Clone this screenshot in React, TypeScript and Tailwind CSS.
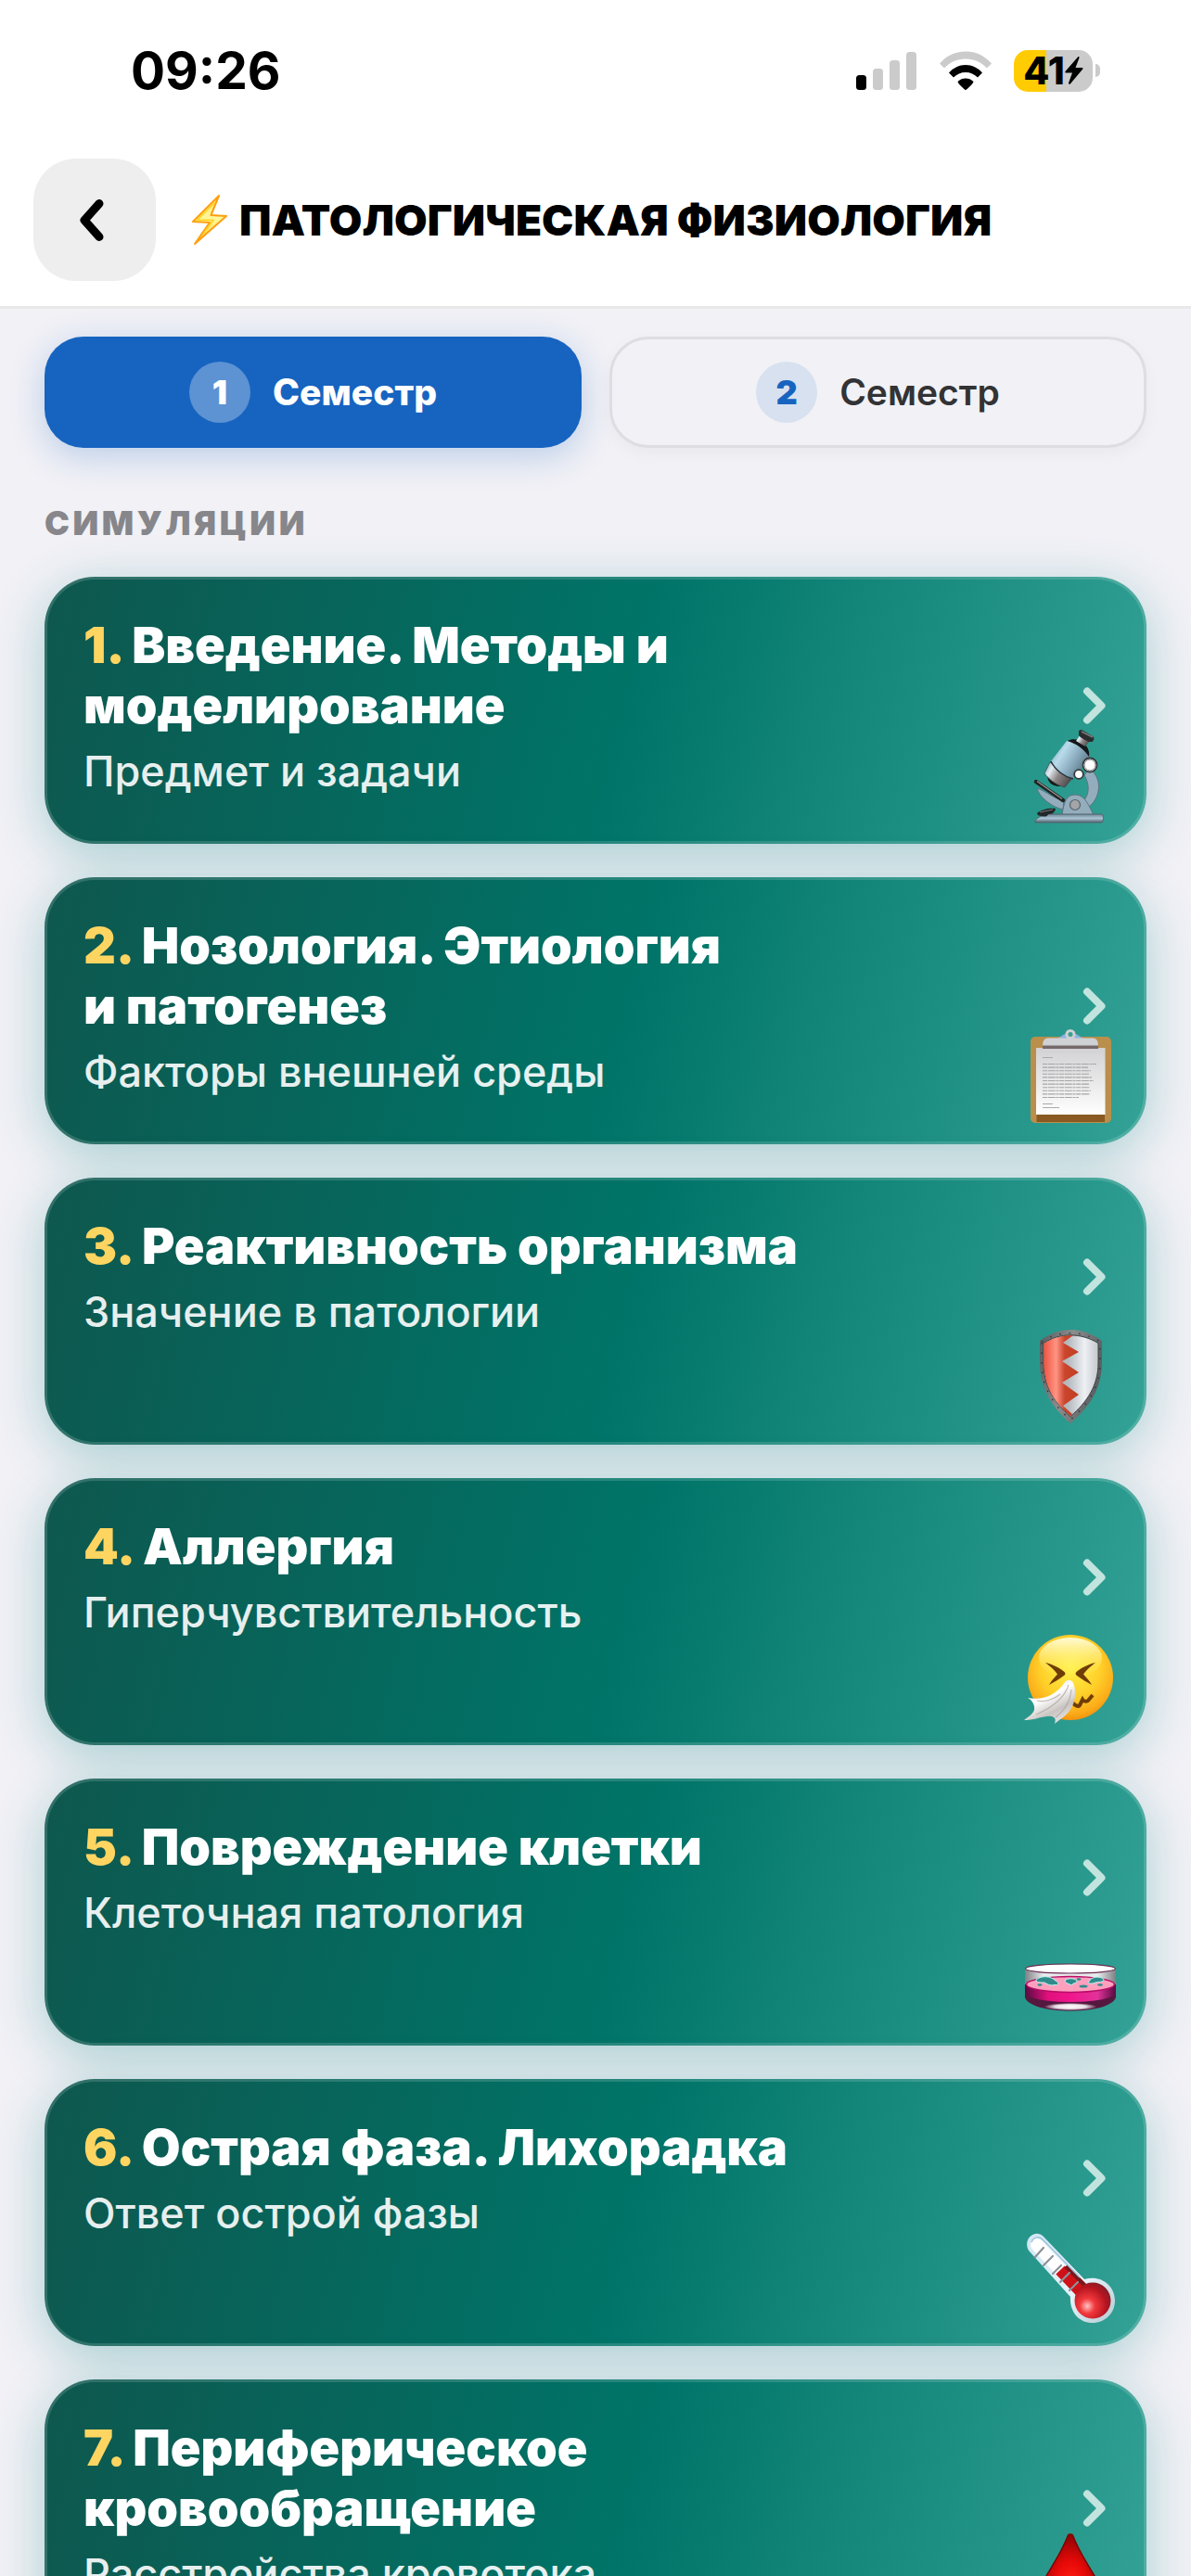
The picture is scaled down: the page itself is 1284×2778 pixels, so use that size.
import { useState } from "react"
import type { ComponentType } from "react"

function SignalIcon() {
  return (
    <svg className="h-[42px] w-[66px]" viewBox="0 0 66 42" aria-hidden="true">
      <rect x="0" y="26" width="11" height="16" rx="3.5" fill="#000" />
      <rect x="18" y="19" width="11" height="23" rx="3.5" fill="#cbcbcb" />
      <rect x="36" y="10" width="11" height="32" rx="3.5" fill="#cbcbcb" />
      <rect x="54" y="1" width="11" height="41" rx="3.5" fill="#cbcbcb" />
    </svg>
  )
}

function WifiIcon() {
  return (
    <svg className="h-[42px] w-[58px]" viewBox="0 0 58 42" aria-hidden="true">
      <path d="M1 13.5C8.500 5 18 .5 29 .5S49.500 5 57 13.500L52 18.500C46 12 38 8.500 29 8.500S12 12 6 18.500Z" fill="#cbcbcb" />
      <path d="M11 23.500C16 18 22 15 29 15S42 18 47 23.500L42 28.500C38.500 25 34 23 29 23S19.500 25 16 28.500Z" fill="#000" />
      <path d="M20.500 33C23 30.500 26 29.500 29 29.500S35 30.500 37.500 33C37 35.500 31 41 29 42.200C27 41 21 35.500 20.500 33Z" fill="#000" />
    </svg>
  )
}

function Battery({ level }: { level: number }) {
  return (
    <div className="flex items-center gap-[3px]">
      <div
        className="flex h-[45px] w-[85px] items-center justify-center rounded-[15px]"
        style={{ backgroundImage: `linear-gradient(to right, #ffcc04 ${level}%, #cbcbcb ${level}%)` }}
      >
        <span className="text-[41px] leading-[45px] font-extrabold">{level}</span>
        <svg className="h-[30px] w-5 shrink-0" viewBox="0 0 20 30" aria-hidden="true">
          <path d="M14 0.500L0.500 16C0 17 .3 17.500 1 17.500H8L4 28.500C3.800 30 5 30.200 6 29.200L19.300 13.500C19.800 12.700 19.500 12 18.700 12H11.500L15.500 1.500C15.800 .2 14.800 -.3 14 .5Z" />
        </svg>
      </div>
      <div className="h-3.5 w-[5px] rounded-r-full bg-[#cbcbcb]" />
    </div>
  )
}

function BoltIcon() {
  return (
    <svg className="h-14 w-10 shrink-0" viewBox="0 0 40 56" aria-hidden="true">
      <defs>
        <linearGradient id="bolt" x1="0" y1="0" x2="0" y2="1">
          <stop offset="0" stopColor="#ffe98a" />
          <stop offset="0.5" stopColor="#fff79a" />
          <stop offset="1" stopColor="#ffc83a" />
        </linearGradient>
      </defs>
      <path d="M30 2L2 30L20 31L4 54L38 24L21.500 23Z" fill="url(#bolt)" stroke="#ff9f0f" strokeWidth="2" strokeLinejoin="round" />
      <path d="M26 9L7 28L24 28.500L13 43" fill="none" stroke="#ffd21c" strokeWidth="1.500" />
    </svg>
  )
}

const emojiClass = "absolute right-[29px] bottom-[19px] h-[102px] w-[100px]"

function Microscope() {
  return (
    <svg className={emojiClass} viewBox="0 0 100 102" aria-hidden="true">
      <defs>
        <linearGradient id="ms-body" x1="0" y1="0" x2="1" y2="0.6">
          <stop offset="0" stopColor="#6f93a8" />
          <stop offset="0.35" stopColor="#b9dcec" />
          <stop offset="0.7" stopColor="#84a5b8" />
          <stop offset="1" stopColor="#56707f" />
        </linearGradient>
        <linearGradient id="ms-lens" x1="0" y1="0" x2="1" y2="0.5">
          <stop offset="0" stopColor="#6b93ab" />
          <stop offset="0.3" stopColor="#e4edf2" />
          <stop offset="0.6" stopColor="#8d8585" />
          <stop offset="1" stopColor="#504d50" />
        </linearGradient>
        <linearGradient id="ms-base" x1="0" y1="0" x2="0" y2="1">
          <stop offset="0" stopColor="#6f8797" />
          <stop offset="0.5" stopColor="#a9c4d4" />
          <stop offset="1" stopColor="#54636f" />
        </linearGradient>
      </defs>
      <path d="M70 43C84 51 84 73 70 84L62 80C71 72 71 60 65 50Z" fill="#94adbd" stroke="#5d7280" strokeWidth="1" />
      <path d="M14 64C16 73 29 84 42 87L43 77C34 77 24 67 14 64Z" fill="#94adbd" stroke="#5d7280" strokeWidth="1" />
      <path d="M41 93C43 78 46 71 55 71C64 71 68 78 75 93Z" fill="#94adbd" stroke="#5d7280" strokeWidth="1" />
      <circle cx="55" cy="82" r="5.500" fill="#a3a5a8" stroke="#55626c" strokeWidth="1.200" />
      <path d="M12 100C13 96 18 94 26 92H84C86 94 86 99 84 101H14C12 101 11 101 12 100Z" fill="url(#ms-base)" stroke="#53646f" strokeWidth="1" />
      <path d="M13 57L42 77" stroke="#222" strokeWidth="4.500" strokeLinecap="round" />
      <path d="M14 56.500L41 75.500" stroke="#999" strokeWidth="1.200" />
      <path d="M14 91C18 87 28 85 34 86C33 91 30 92 26 92C25 95 22 95 19 94C16 94 14 93 14 91Z" fill="#232628" />
      <path d="M17 90L31 87" stroke="#777" strokeWidth="1" />
      <path d="M25 50C25 57 30 62 38 62L43 60L29 48Z" fill="#171717" />
      <path d="M28 36L22 48C28 56 36 61 44 63L53 52Z" fill="url(#ms-lens)" stroke="#3f4a52" strokeWidth="0.800" />
      <path d="M46 13L29 35C34 45 44 52 53 54L71 30C65 20 57 15 46 13Z" fill="url(#ms-body)" />
      <path d="M29 35C34 45 44 52 53 54" fill="none" stroke="#26323a" strokeWidth="1.500" />
      <path d="M47 13C52 10 60 11 65 16C69 20 71 25 70 30C64 21 56 16 47 13Z" fill="#151719" />
      <path d="M60 7L56 13L66 19L71 13Z" fill="url(#ms-lens)" />
      <path d="M59 3C59 1 61 1 63 1.500L74 8C76 9 76 13 73 14C69 15 60 9 59 7Z" fill="#2b2c2e" />
      <path d="M62 3L74 9" stroke="#7b7b7b" strokeWidth="1.500" />
      <circle cx="71" cy="39" r="7.500" fill="#fff" stroke="#34393c" strokeWidth="1.800" />
      <circle cx="71" cy="39" r="5.800" fill="none" stroke="#999" strokeWidth="1" />
      <circle cx="59" cy="49" r="4.800" fill="#fff" stroke="#34393c" strokeWidth="1.800" />
    </svg>
  )
}

function Clipboard() {
  const rows = [60, 51, 54, 52, 55, 57, 52, 53, 54, 53, 41]
  return (
    <svg className={emojiClass} viewBox="0 0 100 102" aria-hidden="true">
      <defs>
        <linearGradient id="cb-paper" x1="0" y1="0" x2="0" y2="1">
          <stop offset="0" stopColor="#d2d1d3" />
          <stop offset="1" stopColor="#ffffff" />
        </linearGradient>
      </defs>
      <rect x="7" y="8" width="87" height="93" rx="5" fill="#b98f4b" />
      <rect x="13.500" y="88" width="73.500" height="12" fill="#8a5a22" />
      <rect x="13" y="20" width="74.500" height="72" fill="url(#cb-paper)" />
      <path d="M36 10L44 5H56L64 10Z" fill="#8fb2dc" />
      <path d="M20 18C20 12 22 9.500 27 9.500H73C78 9.500 80 12 80 18Z" fill="#cfd1d4" />
      <rect x="20" y="17.500" width="60" height="3.500" fill="#75696a" />
      <circle cx="50" cy="5.500" r="4" fill="#3aa08f" stroke="#cdd0d4" strokeWidth="3" />
      <path d="M20 30.500H31" stroke="#aaa" strokeWidth="1" />
      {rows.map((width, i) => (
        <path key={i} d={`M20 ${37.5 + i * 3.6}h${width - 2}`} stroke="#a5a5a7" strokeWidth="1.100" strokeDasharray="5 0.700 8 0.700 3 0.700" />
      ))}
      <path d="M20 80.500H31M20 84.500H38" stroke="#aaa" strokeWidth="1" />
    </svg>
  )
}

function Shield() {
  return (
    <svg className={emojiClass} viewBox="0 0 100 102" aria-hidden="true">
      <defs>
        <linearGradient id="sh-red" x1="0" y1="0" x2="1" y2="0">
          <stop offset="0" stopColor="#f0543f" />
          <stop offset="0.35" stopColor="#ff9484" />
          <stop offset="0.6" stopColor="#c9452c" />
          <stop offset="1" stopColor="#c33d22" />
        </linearGradient>
        <linearGradient id="sh-white" x1="0" y1="0" x2="1" y2="0">
          <stop offset="0" stopColor="#a9b0b6" />
          <stop offset="0.45" stopColor="#b4babf" />
          <stop offset="0.75" stopColor="#eef0f4" />
          <stop offset="1" stopColor="#c3c8cd" />
        </linearGradient>
        <linearGradient id="sh-rim" x1="0" y1="0" x2="1" y2="0.3">
          <stop offset="0" stopColor="#565b5d" />
          <stop offset="0.5" stopColor="#8a8d8e" />
          <stop offset="1" stopColor="#5c6062" />
        </linearGradient>
      </defs>
      <path d="M17 12C38 -4 63 -4 84 12V36C84 63 70 84 50 101C30 84 17 63 17 36Z" fill="url(#sh-rim)" />
      <path d="M21 14.500C39 3 61 3 80 14.500V36C80 60 68 78 50 93.500C32 78 21 60 21 36Z" fill="url(#sh-white)" stroke="#3b4042" strokeWidth="1" />
      <path d="M53 6L42 14L59 24L41 34L59 46L41 57L59 70L42 82L52 91L50 93C32 78 21.500 60 21.500 36V15C32 8 42 6 53 6Z" fill="url(#sh-red)" />
      <path d="M19 14V36C19 61 31 81 50 97C69 81 82 61 82 36V14M19 13C38 .5 62 .5 82 13" fill="none" stroke="#33383a" strokeWidth="1.500" strokeDasharray="1.500 9" />
    </svg>
  )
}

function SneezingFace() {
  return (
    <svg className={emojiClass} viewBox="0 0 100 102" aria-hidden="true">
      <defs>
        <radialGradient id="sf-face" cx="0.5" cy="0.38" r="0.64">
          <stop offset="0" stopColor="#fff04a" />
          <stop offset="0.55" stopColor="#ffd029" />
          <stop offset="0.85" stopColor="#fbab18" />
          <stop offset="1" stopColor="#f08c0c" />
        </radialGradient>
        <linearGradient id="sf-shine" x1="0" y1="0" x2="0" y2="1">
          <stop offset="0" stopColor="#fffde0" stopOpacity="0.95" />
          <stop offset="1" stopColor="#fff35a" stopOpacity="0" />
        </linearGradient>
        <linearGradient id="sf-tissue" x1="0.2" y1="0" x2="0.8" y2="1">
          <stop offset="0" stopColor="#d5d2cf" />
          <stop offset="0.4" stopColor="#ffffff" />
          <stop offset="0.7" stopColor="#c9c4c1" />
          <stop offset="1" stopColor="#efeceb" />
        </linearGradient>
      </defs>
      <circle cx="50" cy="51" r="46" fill="url(#sf-face)" />
      <ellipse cx="50" cy="30" rx="34" ry="22" fill="url(#sf-shine)" />
      <path d="M23 35C31 37 39 41 43.500 45C45 46.500 44.500 48 43 49C38 53 32 56 27 59C29 55 33 51 36 47.500C33 43 28 39 23 35Z" fill="#703c06" />
      <path d="M77 35C69 37 61 41 56.500 45C55 46.500 55.500 48 57 49C62 53 68 56 73 59C71 55 67 51 64 47.500C67 43 72 39 77 35Z" fill="#703c06" />
      <path d="M52 78C56 82 58 83 60 81L63 75C64 77 67 77 69 76L74 70" fill="none" stroke="#703c06" strokeWidth="4" />
      <path d="M44 56C47 53 51 53 53 57C56 64 56 74 52 82C48 91 40 95 33 101C34 98 34 95 32 94C25 90 12 98 0 97C4 94 10 90 11 86C12 81 9 76 4 73C19 76 34 71 44 56Z" fill="url(#sf-tissue)" />
      <path d="M48 59C44 72 34 82 13 91M51 64C50 77 43 87 34 94M14 76C22 78 32 75 39 69" fill="none" stroke="#a9a39f" strokeWidth="1.200" strokeOpacity="0.700" />
    </svg>
  )
}

function PetriDish() {
  return (
    <svg className={emojiClass} viewBox="0 0 100 102" aria-hidden="true">
      <defs>
        <linearGradient id="pd-side" x1="0" y1="0" x2="1" y2="0">
          <stop offset="0" stopColor="#5c0b42" />
          <stop offset="0.25" stopColor="#e0107d" />
          <stop offset="0.5" stopColor="#f0168d" />
          <stop offset="0.8" stopColor="#e2329a" />
          <stop offset="1" stopColor="#5c0b42" />
        </linearGradient>
        <linearGradient id="pd-glass" x1="0" y1="0" x2="1" y2="0">
          <stop offset="0" stopColor="#7d7f83" />
          <stop offset="0.2" stopColor="#e8eaec" />
          <stop offset="0.8" stopColor="#e8eaec" />
          <stop offset="1" stopColor="#7d7f83" />
        </linearGradient>
        <radialGradient id="pd-foot">
          <stop offset="0" stopColor="#ffffff" />
          <stop offset="0.6" stopColor="#eadfe6" />
          <stop offset="1" stopColor="#5d2047" />
        </radialGradient>
      </defs>
      <path d="M1 41V72C4 81 24 86.500 50 86.500S96 81 99 72V41Z" fill="#55183f" />
      <path d="M1 41V58H99V41Z" fill="url(#pd-glass)" />
      <ellipse cx="50" cy="82" rx="28" ry="4" fill="url(#pd-foot)" />
      <path d="M1.500 58V68C10 80 90 80 98.500 68V58Z" fill="url(#pd-side)" />
      <ellipse cx="50" cy="58" rx="47.500" ry="8.500" fill="#ff9fbe" stroke="#b80f68" strokeWidth="1.500" />
      <ellipse cx="50" cy="41" rx="48.500" ry="5" fill="#fff" stroke="#6b2c50" strokeWidth="1.200" />
      <path d="M13 53C19 48 29 49 34 54C38 56 38 59 33 58.500C28 60 24 57 22 56C18 56 12 56 13 53Z" fill="#318b8c" stroke="#b8f5ec" strokeWidth="1" />
      <path d="M44 54C46 51 55 51 57 54C58 57 53 56 51 59C49 57 44 57 44 54Z" fill="#318b8c" stroke="#b8f5ec" strokeWidth="1" />
      <path d="M72 52C77 49 85 50 86 53C86 56 80 55 77 56C73 58 67 57 70 55Z" fill="#318b8c" stroke="#b8f5ec" strokeWidth="1" />
      <g fill="#318b8c">
        <ellipse cx="64" cy="60" rx="4.500" ry="1.500" />
        <ellipse cx="59" cy="52.500" rx="2.500" ry="1.200" />
        <ellipse cx="17" cy="58.500" rx="2.500" ry="1.200" />
        <ellipse cx="82" cy="58.500" rx="3" ry="1.200" />
      </g>
    </svg>
  )
}

function Thermometer() {
  return (
    <svg className={emojiClass} viewBox="0 0 100 102" aria-hidden="true">
      <defs>
        <radialGradient id="th-bulb" cx="0.35" cy="0.65" r="0.75">
          <stop offset="0" stopColor="#ffc4c4" />
          <stop offset="0.28" stopColor="#f2383c" />
          <stop offset="0.7" stopColor="#b5141f" />
          <stop offset="1" stopColor="#7c2028" />
        </radialGradient>
        <linearGradient id="th-glass" x1="0" y1="0" x2="1" y2="1">
          <stop offset="0" stopColor="#cfe6f3" />
          <stop offset="0.6" stopColor="#e7f3fa" />
          <stop offset="1" stopColor="#b3cad3" />
        </linearGradient>
      </defs>
      <path d="M21 6L65 52C83 47 98 59 98 75C98 89 87 99 74 99C59 99 49 87 50 71L5 21C-2 9 12 -3 21 6Z" fill="url(#th-glass)" />
      <path d="M14 15L52 55" stroke="#fff" strokeWidth="14" strokeLinecap="round" />
      <path d="M39 42L61 65" stroke="#cf1218" strokeWidth="13" />
      <path d="M45 38L66 59" stroke="#7b171d" strokeWidth="4.500" />
      <circle cx="74" cy="75" r="19.500" fill="url(#th-bulb)" />
      <path d="M12 28L21 18M21 37L31 27M31 46L40 37M39 55L49 45M49 64L58 55" stroke="#8b929a" strokeWidth="2.200" strokeLinecap="round" />
      <path d="M8 12C11 5 17 6 21 10L60 50" fill="none" stroke="#9fc3dc" strokeWidth="1.500" />
    </svg>
  )
}

function BloodDrop() {
  return (
    <svg className={emojiClass} viewBox="0 0 100 102" aria-hidden="true">
      <defs>
        <radialGradient id="bd-fill" cx="0.5" cy="0.55" r="0.55">
          <stop offset="0" stopColor="#ff2015" />
          <stop offset="0.45" stopColor="#e80a08" />
          <stop offset="1" stopColor="#8c0404" />
        </radialGradient>
      </defs>
      <path d="M47.500 4C48.500 2.500 51.500 2.500 52.500 4C58 19 66 31 73 43C80 54 83 61 83 68C83 88 68 101 50 101S17 88 17 68C17 61 20 54 27 43C34 31 42 19 47.500 4Z" fill="url(#bd-fill)" stroke="#7a0505" strokeWidth="1.500" />
    </svg>
  )
}

type Topic = { title: string; subtitle: string; Icon: ComponentType }

const topics: Topic[] = [
  { title: "Введение. Методы и моделирование", subtitle: "Предмет и задачи", Icon: Microscope },
  { title: "Нозология. Этиология и\u00a0патогенез", subtitle: "Факторы внешней среды", Icon: Clipboard },
  { title: "Реактивность организма", subtitle: "Значение в патологии", Icon: Shield },
  { title: "Аллергия", subtitle: "Гиперчувствительность", Icon: SneezingFace },
  { title: "Повреждение клетки", subtitle: "Клеточная патология", Icon: PetriDish },
  { title: "Острая фаза. Лихорадка", subtitle: "Ответ острой фазы", Icon: Thermometer },
  { title: "Периферическое кровообращение", subtitle: "Расстройства кровотока", Icon: BloodDrop },
]

function TopicCard({ topic, index }: { topic: Topic; index: number }) {
  const { title, subtitle, Icon } = topic
  return (
    <li>
      <a
        href={`#topic-${index + 1}`}
        className="relative block min-h-72 rounded-[54px] border-[3px] border-white/15 bg-[linear-gradient(104deg,#0e574e_0%,#007468_53%,#34a296_100%)] bg-origin-border px-[39px] pt-[38px] pb-9 shadow-[0_12px_54px_rgba(0,130,125,0.3)]"
      >
        <div className="flex items-center justify-between gap-36">
          <div>
            <h3 className="text-[54px] leading-[65px] font-black text-white">
              <span className="text-[#ffd561]">{index + 1}.</span> {title}
            </h3>
            <p className="mt-3 text-[45px] leading-[54px] font-medium text-white/90">{subtitle}</p>
          </div>
          <svg className="h-10 w-7 shrink-0" viewBox="0 0 28 40" aria-hidden="true">
            <path d="M6 4.500L21.500 20L6 35.500" fill="none" stroke="#c2e4de" strokeWidth="8" strokeLinecap="round" strokeLinejoin="round" />
          </svg>
        </div>
        <Icon />
      </a>
    </li>
  )
}

export default function App() {
  const [semester, setSemester] = useState(1)

  return (
    <div className="flex h-screen flex-col overflow-hidden bg-[#f1f1f6] font-[Inter,'Liberation_Sans',sans-serif] text-black">
      <div className="flex h-[152px] shrink-0 items-center justify-between bg-white pr-[98px] pl-[141px]">
        <time className="text-[55px] leading-none font-bold">09:26</time>
        <div className="flex items-center gap-[23px]">
          <SignalIcon />
          <WifiIcon />
          <Battery level={41} />
        </div>
      </div>

      <header className="flex shrink-0 items-center border-b-[3px] border-[#e8e8e8] bg-white px-9 pt-[19px] pb-[27px]">
        <button type="button" aria-label="Назад" className="flex size-[132px] items-center justify-center rounded-[46px] bg-[#eeeeee]">
          <svg className="mr-1 h-12 w-9" viewBox="0 0 36 48" aria-hidden="true">
            <path d="M25 6.500L9 24.500L25 42.500" fill="none" stroke="#000" strokeWidth="9" strokeLinecap="round" strokeLinejoin="round" />
          </svg>
        </button>
        <h1 className="ml-[38px] flex items-center gap-3 text-[46px] leading-[54px] font-black">
          <BoltIcon />
          ПАТОЛОГИЧЕСКАЯ ФИЗИОЛОГИЯ
        </h1>
      </header>

      <main className="min-h-0 flex-1 overflow-y-auto px-12 pt-[30px] pb-9 [scrollbar-width:none]">
        <div className="grid grid-cols-2 gap-[30px]">
          {[1, 2].map(n => {
            const active = n === semester
            return (
              <button
                key={n}
                type="button"
                aria-pressed={active}
                onClick={() => setSemester(n)}
                className={
                  active
                    ? "flex h-[120px] items-center justify-center gap-6 rounded-[42px] bg-[#1764c0] text-[39px] font-extrabold text-white shadow-[0_9px_36px_rgba(23,100,192,0.25)]"
                    : "flex h-[120px] items-center justify-center gap-6 rounded-[42px] border-[3px] border-[#dddde2] bg-[#f1f1f6] text-[39px] font-semibold text-[#333335] shadow-[0_6px_18px_rgba(0,0,0,0.04)]"
                }
              >
                <span
                  className={
                    active
                      ? "flex size-[66px] items-center justify-center rounded-full bg-white/30 text-[36px] font-black"
                      : "flex size-[66px] items-center justify-center rounded-full bg-[#d7e1ef] text-[36px] font-black text-[#1764c0]"
                  }
                >
                  {n}
                </span>
                Семестр
              </button>
            )
          })}
        </div>

        <h2 className="mt-[59px] text-[36px] leading-[44px] font-black tracking-widest text-[#86868b]">СИМУЛЯЦИИ</h2>

        <ul className="mt-9 flex flex-col gap-9">
          {topics.map((topic, i) => (
            <TopicCard key={topic.title} topic={topic} index={i} />
          ))}
        </ul>
      </main>
    </div>
  )
}
